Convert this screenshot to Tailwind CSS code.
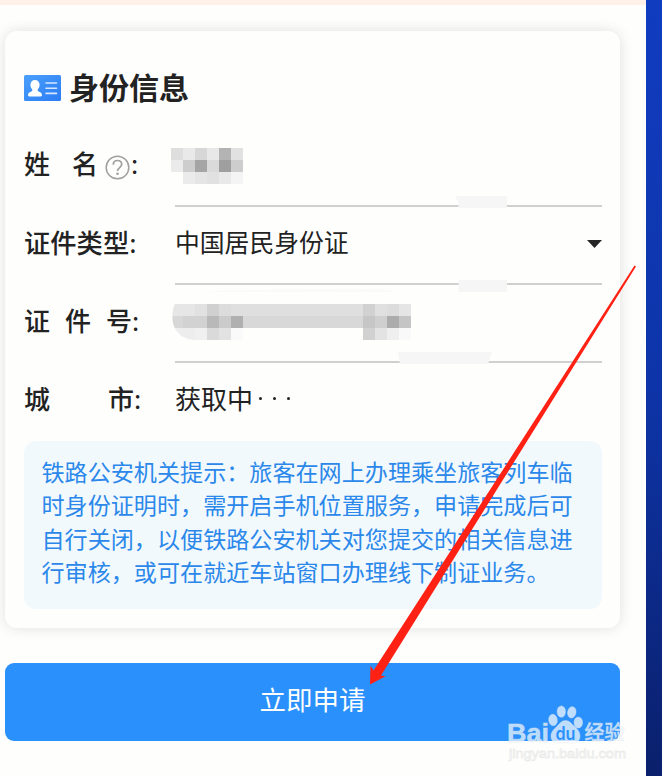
<!DOCTYPE html>
<html lang="zh-CN">
<head>
    <meta charset="UTF-8" />
    <meta name="viewport" content="width=device-width, initial-scale=1.0"/>
    <title>身份信息</title>
    <script src="https://cdn.jsdelivr.net/npm/@tailwindcss/browser@4"></script>
</head>
<body class="relative flex w-[662px] h-[776px] overflow-hidden bg-[#fefefd] text-[#222] font-['Noto_Sans_CJK_SC',sans-serif]">
<main class="w-[646px] h-full shrink-0">
    <div class="h-[5px] bg-[#fff1ea]"></div>

    <section class="mt-[26px] ml-[5px] w-[615px] h-[597px] pl-[19px] pr-[18px] rounded-[12px] bg-[#fefefd] shadow-[0_0_14px_rgba(0,0,0,0.12)]">
        <div class="h-[98px] pt-[16px] flex items-center">
            <!-- carte d'identité -->
            <svg class="w-[37px] h-[26px] shrink-0" viewBox="0 0 37 26">
                <defs>
                    <linearGradient id="idCard" x1="0" y1="0" x2="1" y2="1">
                        <stop offset="0" stop-color="#4ba0fb"/>
                        <stop offset="1" stop-color="#2b7cf3"/>
                    </linearGradient>
                </defs>
                <rect width="37" height="26" rx="1.5" fill="url(#idCard)"/>
                <path fill="#fff" d="M11 5c2.900 0 4.600 2.100 4.600 4.800 0 2-.9 3.700-1.900 4.600v1.300c0 .8 4.300 1.400 4.300 4.200 0 1.300-1.100 1.600-2.200 1.600H6.200C5 21.500 4 21.200 4 19.900c0-2.800 4.300-3.400 4.300-4.200v-1.300c-1-.9-1.900-2.600-1.900-4.600C6.400 7.100 8.100 5 11 5z"/>
                <path stroke="#d5e8ff" stroke-width="1.600" stroke-linecap="round" d="M22 8h10.500M22 13.200h10.500M22 18.400h10.500"/>
            </svg>
            <h2 class="ml-[8px] -mt-[4px] text-[30px] leading-none font-bold">身份信息</h2>
        </div>

        <div class="h-[78px] flex">
            <div class="w-[151px] h-[66px] flex items-center text-[26px] font-medium">
                <span>姓</span><span class="ml-[22px]">名</span>
                <svg class="w-[25px] h-[25px] ml-[7px] mt-[11px]" viewBox="0 0 25 25" fill="none" stroke="#a0a0a0">
                    <circle cx="12.500" cy="12.500" r="11.300" stroke-width="1.500"/>
                    <path stroke-width="1.700" d="M8.300 9.700c0-2.600 1.800-4.200 4.200-4.200s4.200 1.500 4.200 3.800c0 3.200-4.200 3.300-4.200 6.700"/>
                    <circle cx="12.500" cy="18.700" r="1.300" fill="#a0a0a0" stroke="none"/>
                </svg>
                <span class="ml-px font-normal">:</span>
            </div>
            <div class="flex-1 h-[78px] border-b-2 border-[#d0d0d0]"></div>
        </div>

        <div class="h-[78px] flex">
            <div class="w-[151px] h-[70px] flex items-center text-[26.300px] font-medium">证件类型<span class="font-normal">:</span></div>
            <div class="flex-1 h-[78px] pb-[6px] flex items-center justify-between border-b-2 border-[#d0d0d0] text-[24.800px]">
                <span>中国居民身份证</span>
                <svg class="w-[15px] h-[8px] mt-[4px]" viewBox="0 0 15 8"><path fill="#252525" d="M0 0h15L7.500 8z"/></svg>
            </div>
        </div>

        <div class="h-[78px] flex">
            <div class="w-[151px] h-[68px] flex items-center text-[26px] font-medium">
                <span>证</span><span class="ml-[15px]">件</span><span class="ml-[15px]">号</span><span class="font-normal">:</span>
            </div>
            <div class="flex-1 h-[78px] border-b-2 border-[#d0d0d0]"></div>
        </div>

        <div class="h-[78px] flex">
            <div class="w-[151px] h-[68px] flex items-center text-[26px] font-medium">
                <span>城</span><span class="ml-[58px]">市</span><span class="font-normal">:</span>
            </div>
            <div class="h-[68px] flex items-center text-[26px]">
                <span>获取中</span>
                <span class="ml-[6px] mt-[3px] flex gap-[11px]">
                    <i class="size-[3px] rounded-full bg-[#222]"></i>
                    <i class="size-[3px] rounded-full bg-[#222]"></i>
                    <i class="size-[3px] rounded-full bg-[#222]"></i>
                </span>
            </div>
        </div>

        <div class="h-[168px] pl-[17.500px] pt-[14px] rounded-[12px] bg-[#f2f9fd] text-[23.100px] leading-[33.300px] text-[#2b88ea] whitespace-nowrap">
            <p>铁路公安机关提示：旅客在网上办理乘坐旅客列车临</p>
            <p>时身份证明时，需开启手机位置服务，申请完成后可</p>
            <p>自行关闭，以便铁路公安机关对您提交的相关信息进</p>
            <p>行审核，或可在就近车站窗口办理线下制证业务。</p>
        </div>
    </section>

    <button class="block mt-[35px] ml-[5px] w-[615px] h-[78px] pb-[7px] rounded-[9px] bg-[#2990fc] text-white text-[26.500px]">立即申请</button>
</main>

<aside class="flex-1 bg-linear-to-b from-[#103cc0] via-[#0d34a8] to-[#0a206c]"></aside>

<!-- mosaïques, flèche et filigrane par-dessus la page -->
<svg class="absolute inset-0 w-[662px] h-[776px] pointer-events-none" viewBox="0 0 662 776">
    <defs>
        <clipPath id="idMask"><path d="M175 304H411V340H196C181 340 172 329 172.500 317C172.600 311 173 307 175 304z"/></clipPath>
    </defs>

    <g shape-rendering="crispEdges">
        <path fill="#dedede" d="M171 148h12v12h-12z"/>
        <path fill="#e9e9e9" d="M183 148h12v12h-12z"/>
        <path fill="#d7d7d7" d="M195 148h12v12h-12z"/>
        <path fill="#e8e8e8" d="M207 148h12v12h-12z"/>
        <path fill="#b3b3b3" d="M219 148h12v12h-12z"/>
        <path fill="#e1e1e1" d="M231 148h12v12h-12z"/>
        <path fill="#ebebeb" d="M171 160h12v12h-12z"/>
        <path fill="#cdcdcd" d="M183 160h12v12h-12z"/>
        <path fill="#a5a5a5" d="M195 160h12v12h-12z"/>
        <path fill="#dadada" d="M207 160h12v12h-12z"/>
        <path fill="#9f9f9f" d="M219 160h12v12h-12z"/>
        <path fill="#cdcdcd" d="M231 160h12v12h-12z"/>
        <path fill="#ebebeb" d="M183 172h12v12h-12z"/>
        <path fill="#e5e5e5" d="M195 172h12v12h-12z"/>
        <path fill="#e1e1e1" d="M207 172h12v12h-12z"/>
        <path fill="#e9e9e9" d="M219 172h12v12h-12z"/>
        <path fill="#f4f4f4" d="M231 172h12v12h-12z"/>
    </g>

    <g clip-path="url(#idMask)" shape-rendering="crispEdges">
        <path fill="#e6e6e6" d="M171 304h24v12h-24z"/>
        <path fill="#e1e1e1" d="M195 304h12v12h-12z"/>
        <path fill="#d0d0d0" d="M207 304h12v12h-12z"/>
        <path fill="#dcdcdc" d="M219 304h12v12h-12z"/>
        <path fill="#dfdfdf" d="M231 304h132v12h-132z"/>
        <path fill="#d1d1d1" d="M363 304h12v12h-12z"/>
        <path fill="#e0e0e0" d="M375 304h12v12h-12z"/>
        <path fill="#dcdcdc" d="M387 304h12v12h-12z"/>
        <path fill="#e5e5e5" d="M399 304h12v12h-12z"/>
        <path fill="#d7d7d7" d="M171 316h12v12h-12z"/>
        <path fill="#d2d2d2" d="M183 316h24v12h-24z"/>
        <path fill="#b9b9b9" d="M207 316h12v12h-12z"/>
        <path fill="#cbcbcb" d="M219 316h12v12h-12z"/>
        <path fill="#b0b0b0" d="M231 316h12v12h-12z"/>
        <path fill="#d8d8d8" d="M243 316h120v12h-120z"/>
        <path fill="#c6c6c6" d="M363 316h12v12h-12z"/>
        <path fill="#cfcfcf" d="M375 316h12v12h-12z"/>
        <path fill="#acacac" d="M387 316h12v12h-12z"/>
        <path fill="#c5c5c5" d="M399 316h12v12h-12z"/>
        <path fill="#ededed" d="M171 328h24v12h-24z"/>
        <path fill="#f0f0f0" d="M195 328h12v12h-12z"/>
        <path fill="#dadada" d="M207 328h12v12h-12z"/>
        <path fill="#e2e2e2" d="M219 328h12v12h-12z"/>
        <path fill="#fafafa" d="M231 328h12v12h-12z"/>
        <path fill="#d1d1d1" d="M363 328h12v12h-12z"/>
        <path fill="#e3e3e3" d="M375 328h12v12h-12z"/>
        <path fill="#efefef" d="M387 328h12v12h-12z"/>
        <path fill="#f9f9f9" d="M399 328h12v12h-12z"/>
    </g>

    <g fill="#f6f6f6">
        <path d="M455 196h52v12h-48.500v-6z"/>
        <path d="M458.500 280H507v12h-48.500z"/>
        <path d="M398 352h94l-4 12h-88z"/>
        <path fill="#fafafa" d="M193 292C240 290 290 289 350 289.500c25-.5 40 0 46 2.500z"/>
    </g>

    <!-- filigrane Baidu -->
    <g fill="#fff" fill-opacity=".7" stroke="#dbe3ec" stroke-opacity=".5" stroke-width=".8">
        <text x="507" y="741.500" class="font-['Liberation_Sans',sans-serif] font-bold text-[26px]" textLength="42" lengthAdjust="spacingAndGlyphs">Bai</text>
        <ellipse cx="553" cy="720" rx="4.300" ry="5.700" transform="rotate(-8 553 720)"/>
        <ellipse cx="561.300" cy="711.600" rx="4.200" ry="5.700"/>
        <ellipse cx="571.800" cy="712.300" rx="4.200" ry="5.700" transform="rotate(10 571.800 712.300)"/>
        <ellipse cx="578.300" cy="722.500" rx="4.300" ry="5.500"/>
        <path d="M565.500 720.500c4.200 0 6 3.300 8.500 5.500 3.200 3 6 5.800 6 10 0 4.500-3 7-7 7-2.600 0-4.600-.5-7.500-.5s-5 .5-7.500.5c-4.200 0-7-2.500-7-7 0-4.200 3.300-7 6.300-10 2.400-2.300 4-5.500 8.200-5.500z"/>
        <text x="584.500" y="740" class="font-['Noto_Sans_CJK_SC',sans-serif] font-medium text-[20px]">经验</text>
        <text x="509" y="758" stroke="#d8d8d8" class="font-['Liberation_Sans',sans-serif] text-[13.500px]" textLength="117" lengthAdjust="spacingAndGlyphs">jingyan.baidu.com</text>
    </g>
    <text x="555.500" y="739.500" fill="#2990fc" class="font-['Inter',sans-serif] font-semibold text-[18px]" textLength="20" lengthAdjust="spacingAndGlyphs">du</text>

    <path fill="#ff2114" d="M634.500 265.500L636 266.500L381 675.500L385.500 676.300L370 684.500L370.500 665.500L373.500 670.500z"/>
</svg>
</body>
</html>
